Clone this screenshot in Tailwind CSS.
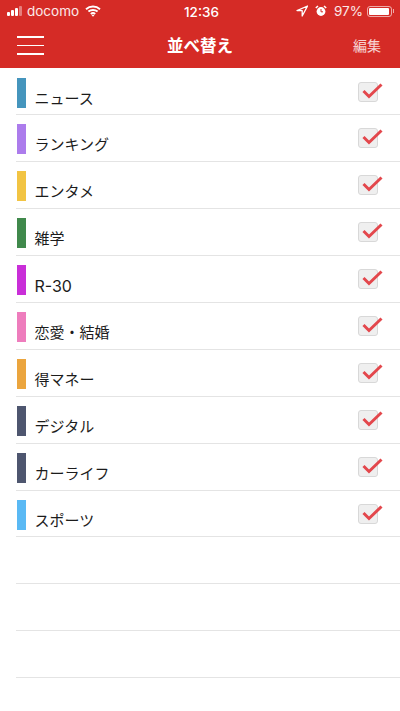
<!DOCTYPE html>
<html lang="ja">
<head>
  <meta charset="UTF-8" />
  <meta name="viewport" content="width=device-width, initial-scale=1.0" />
  <title>並べ替え</title>
  <script src="https://cdn.jsdelivr.net/npm/@tailwindcss/browser@4"></script>
</head>
<body class="bg-white h-[711px] overflow-hidden font-['Inter','Noto_Sans_CJK_JP',sans-serif] text-[#1c1c1c]">
  <!-- STATUS BAR + NAV -->
  <header class="bg-[#d52b26] h-[68px] text-white">
    <div class="h-[22px] flex items-center justify-between pl-[7px] pr-[6px] text-[13.5px] relative">
      <div class="flex items-center">
        <div class="flex items-end gap-[1px] h-[10px]">
          <span class="w-[3px] h-[4px] bg-white rounded-[1px]"></span>
          <span class="w-[3px] h-[6px] bg-white rounded-[1px]"></span>
          <span class="w-[3px] h-[8px] bg-white rounded-[1px]"></span>
          <span class="w-[3px] h-[10px] bg-white/40 rounded-[1px]"></span>
        </div>
        <span class="ml-[5px] text-white/90">docomo</span>
        <svg class="ml-[6px]" width="16" height="12" viewBox="0 0 16 12" fill="none" stroke="white" stroke-width="1.9">
          <path d="M1 4.2C5 .6 11 .6 15 4.2" />
          <path d="M3.4 6.6C6 4.4 10 4.4 12.6 6.6" />
          <path d="M5.8 9C7 8 9 8 10.2 9" />
          <path d="M8 11.8L6.6 10.2C7.4 9.7 8.6 9.7 9.4 10.2Z" fill="white" stroke="none" />
        </svg>
      </div>
      <span class="absolute left-[184px] top-[2px] text-[13.5px] font-medium">12:36</span>
      <div class="flex items-center">
        <svg width="12" height="12" viewBox="0 0 12 12"><path d="M11.5 1L1 5.6h5.2V11z" fill="none" stroke="white" stroke-width="1.3" stroke-linejoin="round" /></svg>
        <svg class="ml-[7px]" width="12" height="12" viewBox="0 0 12 12">
          <circle cx="6" cy="6.5" r="4.4" fill="white" />
          <path d="M6 4v2.8h2" fill="none" stroke="#d52b26" stroke-width="1" />
          <path d="M.8 3L3 1M11.2 3L9 1" stroke="white" stroke-width="1.5" />
        </svg>
        <span class="ml-[7px] text-white/90">97%</span>
        <div class="ml-[4px] w-[25px] h-[11px] border border-white/60 rounded-[3px] p-[1px]">
          <div class="h-full w-[95%] bg-white rounded-[1px]"></div>
        </div>
        <span class="ml-[1px] w-[1px] h-[4px] bg-white/60"></span>
      </div>
    </div>
    <div class="h-[46px] flex items-center justify-between relative pl-[17px] pr-[19px]">
      <div class="flex flex-col gap-[7px] w-[27px] mt-[1px]">
        <span class="h-[1.5px] bg-white"></span>
        <span class="h-[1.5px] bg-white"></span>
        <span class="h-[1.5px] bg-white"></span>
      </div>
      <h1 class="absolute left-0 right-0 text-center text-[16.5px] font-bold mt-[2px]">並べ替え</h1>
      <a href="#" class="text-[14px] text-white/80 mt-[1px]">編集</a>
    </div>
  </header>

  <!-- LIST -->
  <main>
    <ul id="rows" class="ml-4 pt-[0.5px]">
      <li class="h-[46.9px] border-b border-[#e4e4e4] flex items-start relative">
        <span class="ml-[1px] mt-[9px] w-[8.5px] h-[30px] bg-[#4595bd]"></span>
        <span class="ml-[9px] mt-[19px] text-[15px] leading-[22px]">ニュース</span>
        <svg class="absolute left-[342px] top-[12px]" width="25" height="22" viewBox="0 0 25 22"><rect x=".5" y="1.500" width="19" height="19" rx="2.5" fill="#efefef" stroke="#d8d8d8" /><path d="M5.500 10l5.500 5.500L23.500 3.500" fill="none" stroke="#e3474c" stroke-width="3" /></svg>
      </li>
      <li class="h-[46.9px] border-b border-[#e4e4e4] flex items-start relative">
        <span class="ml-[1px] mt-[9px] w-[8.5px] h-[30px] bg-[#ac7cec]"></span>
        <span class="ml-[9px] mt-[19px] text-[15px] leading-[22px]">ランキング</span>
        <svg class="absolute left-[342px] top-[12px]" width="25" height="22" viewBox="0 0 25 22"><rect x=".5" y="1.500" width="19" height="19" rx="2.5" fill="#efefef" stroke="#d8d8d8" /><path d="M5.500 10l5.500 5.500L23.500 3.500" fill="none" stroke="#e3474c" stroke-width="3" /></svg>
      </li>
      <li class="h-[46.9px] border-b border-[#e4e4e4] flex items-start relative">
        <span class="ml-[1px] mt-[9px] w-[8.5px] h-[30px] bg-[#f2c443]"></span>
        <span class="ml-[9px] mt-[19px] text-[15px] leading-[22px]">エンタメ</span>
        <svg class="absolute left-[342px] top-[12px]" width="25" height="22" viewBox="0 0 25 22"><rect x=".5" y="1.500" width="19" height="19" rx="2.5" fill="#efefef" stroke="#d8d8d8" /><path d="M5.500 10l5.500 5.500L23.500 3.500" fill="none" stroke="#e3474c" stroke-width="3" /></svg>
      </li>
      <li class="h-[46.9px] border-b border-[#e4e4e4] flex items-start relative">
        <span class="ml-[1px] mt-[9px] w-[8.5px] h-[30px] bg-[#40894c]"></span>
        <span class="ml-[9px] mt-[19px] text-[15px] leading-[22px]">雑学</span>
        <svg class="absolute left-[342px] top-[12px]" width="25" height="22" viewBox="0 0 25 22"><rect x=".5" y="1.500" width="19" height="19" rx="2.5" fill="#efefef" stroke="#d8d8d8" /><path d="M5.500 10l5.500 5.500L23.500 3.500" fill="none" stroke="#e3474c" stroke-width="3" /></svg>
      </li>
      <li class="h-[46.9px] border-b border-[#e4e4e4] flex items-start relative">
        <span class="ml-[1px] mt-[9px] w-[8.5px] h-[30px] bg-[#c92fd8]"></span>
        <span class="ml-[9px] mt-[19px] text-[16px] leading-[22px]">R-30</span>
        <svg class="absolute left-[342px] top-[12px]" width="25" height="22" viewBox="0 0 25 22"><rect x=".5" y="1.500" width="19" height="19" rx="2.5" fill="#efefef" stroke="#d8d8d8" /><path d="M5.500 10l5.500 5.500L23.500 3.500" fill="none" stroke="#e3474c" stroke-width="3" /></svg>
      </li>
      <li class="h-[46.9px] border-b border-[#e4e4e4] flex items-start relative">
        <span class="ml-[1px] mt-[9px] w-[8.5px] h-[30px] bg-[#ee7dbd]"></span>
        <span class="ml-[9px] mt-[19px] text-[15px] leading-[22px]">恋愛・結婚</span>
        <svg class="absolute left-[342px] top-[12px]" width="25" height="22" viewBox="0 0 25 22"><rect x=".5" y="1.500" width="19" height="19" rx="2.5" fill="#efefef" stroke="#d8d8d8" /><path d="M5.500 10l5.500 5.500L23.500 3.500" fill="none" stroke="#e3474c" stroke-width="3" /></svg>
      </li>
      <li class="h-[46.9px] border-b border-[#e4e4e4] flex items-start relative">
        <span class="ml-[1px] mt-[9px] w-[8.5px] h-[30px] bg-[#eba53e]"></span>
        <span class="ml-[9px] mt-[19px] text-[15px] leading-[22px]">得マネー</span>
        <svg class="absolute left-[342px] top-[12px]" width="25" height="22" viewBox="0 0 25 22"><rect x=".5" y="1.500" width="19" height="19" rx="2.5" fill="#efefef" stroke="#d8d8d8" /><path d="M5.500 10l5.500 5.500L23.500 3.500" fill="none" stroke="#e3474c" stroke-width="3" /></svg>
      </li>
      <li class="h-[46.9px] border-b border-[#e4e4e4] flex items-start relative">
        <span class="ml-[1px] mt-[9px] w-[8.5px] h-[30px] bg-[#4e566f]"></span>
        <span class="ml-[9px] mt-[19px] text-[15px] leading-[22px]">デジタル</span>
        <svg class="absolute left-[342px] top-[12px]" width="25" height="22" viewBox="0 0 25 22"><rect x=".5" y="1.500" width="19" height="19" rx="2.5" fill="#efefef" stroke="#d8d8d8" /><path d="M5.500 10l5.500 5.500L23.500 3.500" fill="none" stroke="#e3474c" stroke-width="3" /></svg>
      </li>
      <li class="h-[46.9px] border-b border-[#e4e4e4] flex items-start relative">
        <span class="ml-[1px] mt-[9px] w-[8.5px] h-[30px] bg-[#4e566f]"></span>
        <span class="ml-[9px] mt-[19px] text-[15px] leading-[22px]">カーライフ</span>
        <svg class="absolute left-[342px] top-[12px]" width="25" height="22" viewBox="0 0 25 22"><rect x=".5" y="1.500" width="19" height="19" rx="2.5" fill="#efefef" stroke="#d8d8d8" /><path d="M5.500 10l5.500 5.500L23.500 3.500" fill="none" stroke="#e3474c" stroke-width="3" /></svg>
      </li>
      <li class="h-[46.9px] border-b border-[#e4e4e4] flex items-start relative">
        <span class="ml-[1px] mt-[9px] w-[8.5px] h-[30px] bg-[#5ab9f4]"></span>
        <span class="ml-[9px] mt-[19px] text-[15px] leading-[22px]">スポーツ</span>
        <svg class="absolute left-[342px] top-[12px]" width="25" height="22" viewBox="0 0 25 22"><rect x=".5" y="1.500" width="19" height="19" rx="2.5" fill="#efefef" stroke="#d8d8d8" /><path d="M5.500 10l5.500 5.500L23.500 3.500" fill="none" stroke="#e3474c" stroke-width="3" /></svg>
      </li>
      <li class="h-[46.9px] border-b border-[#e4e4e4]"></li>
      <li class="h-[46.9px] border-b border-[#e4e4e4]"></li>
      <li class="h-[46.9px] border-b border-[#e4e4e4]"></li>
    </ul>
  </main>
</body>
</html>
